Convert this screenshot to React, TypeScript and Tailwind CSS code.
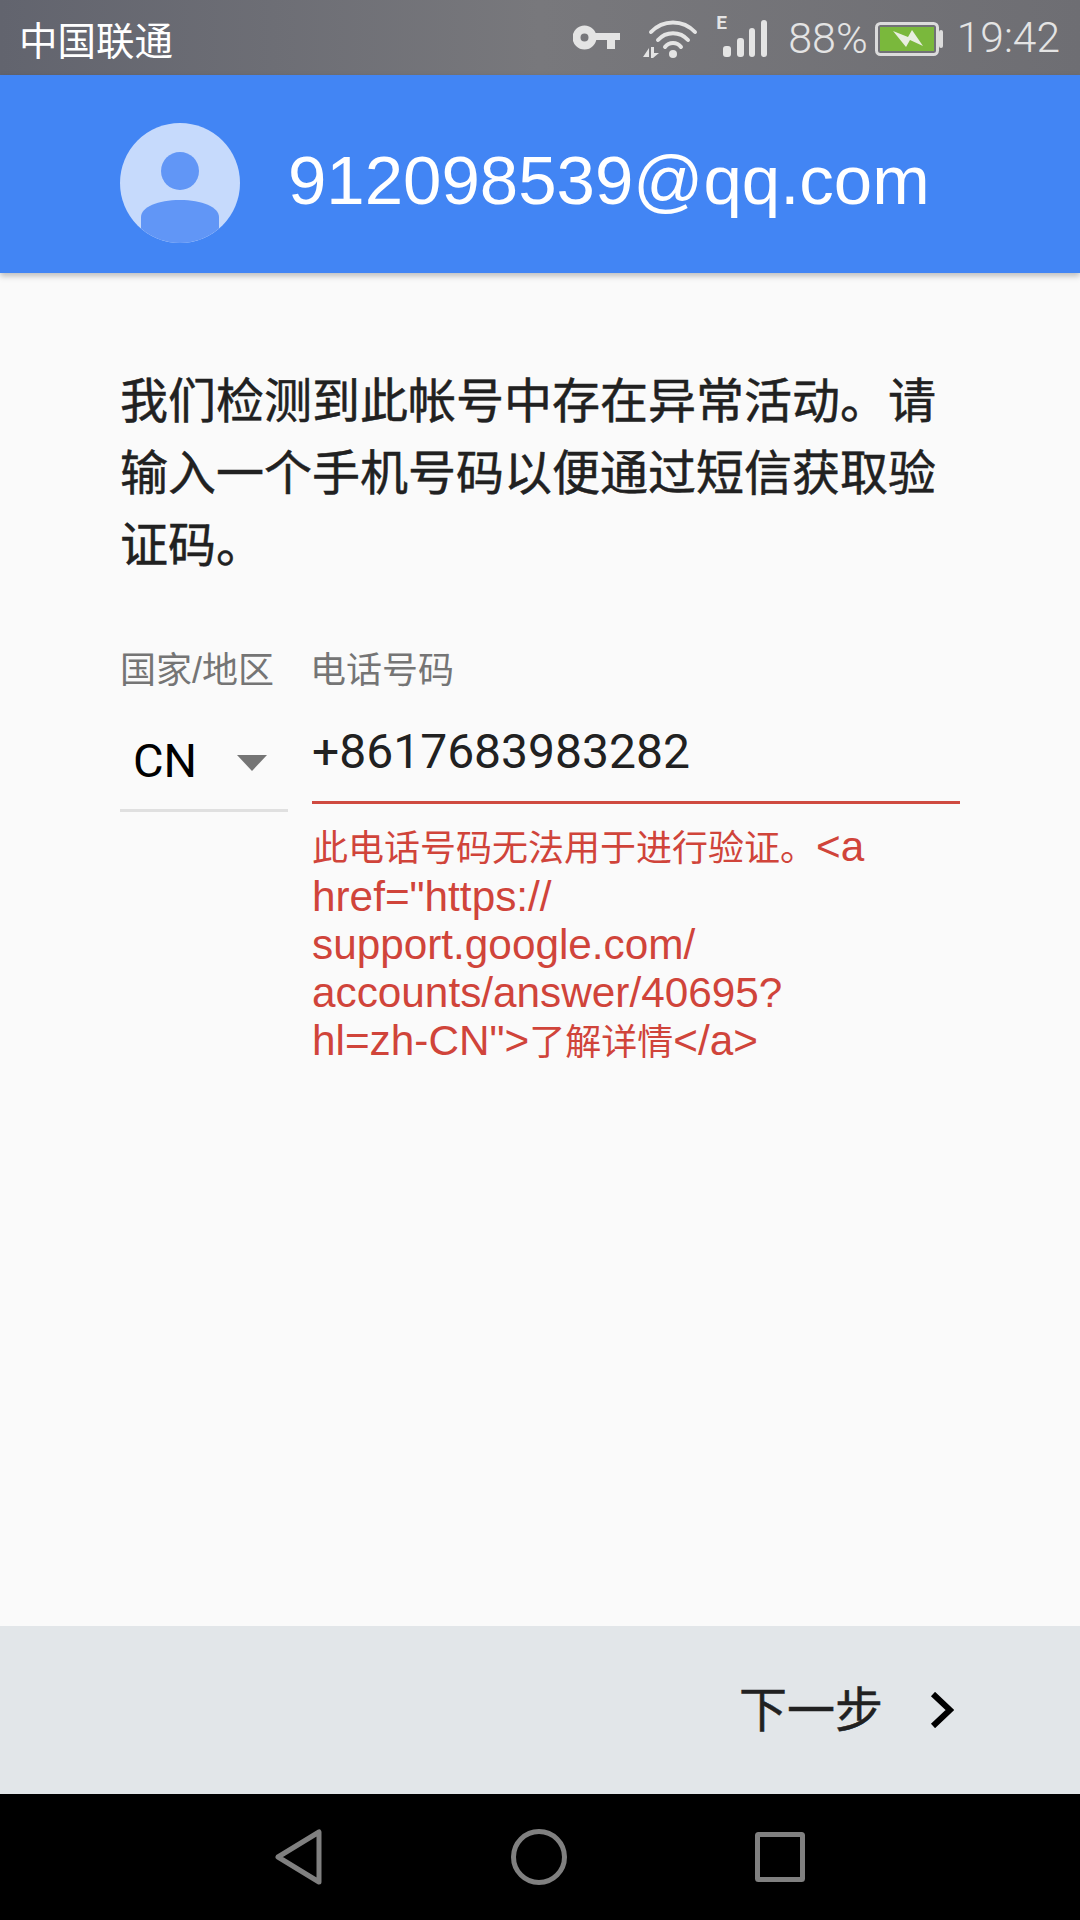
const roboto = "font-['Roboto','Noto_Sans_CJK_SC',sans-serif]";

function KeyIcon() {
  return (
    <svg width="47" height="25" viewBox="0 0 47 25" fill="#e4e4e4">
      <path fillRule="evenodd" d="M11.5 0.5a12 12 0 1 1 0 24a12 12 0 0 1 0-24zM11.5 8.5a4 4 0 1 0 0 8a4 4 0 0 0 0-8z" />
      <path d="M20 8h27v7h-5v9h-8v-9H20z" />
    </svg>
  );
}

function WifiIcon() {
  return (
    <svg width="56" height="38" viewBox="0 0 56 38" fill="none" stroke="#e4e4e4" strokeWidth="4" strokeLinecap="round">
      <path d="M8 12A30 30 0 0 1 52 12" />
      <path d="M15 20A20 20 0 0 1 45 20" />
      <path d="M22 27A10 10 0 0 1 38 27" />
      <circle cx="30" cy="34" r="4" fill="#e4e4e4" stroke="none" />
      <path d="M0 37L6 28V37zM8 27H11V33L16 33L10 38H8z" fill="#e4e4e4" stroke="none" />
    </svg>
  );
}

function SignalIcon() {
  return (
    <div className="relative w-[44px] h-[37px] flex items-end">
      <span className={`absolute left-[-7px] top-[-7px] text-[19px] leading-[19px] font-bold text-[#e4e4e4] ${roboto}`}>E</span>
      <div className="w-[8px] h-[11px] rounded-[3px] bg-[#e4e4e4]" />
      <div className="ml-[6px] w-[7px] h-[19px] rounded-[3px] bg-[#e4e4e4]" />
      <div className="ml-[5px] w-[6px] h-[29px] rounded-[3px] bg-[#e4e4e4]" />
      <div className="ml-[6px] w-[6px] h-[37px] rounded-[3px] bg-[#e4e4e4]" />
    </div>
  );
}

function BatteryIcon() {
  return (
    <svg width="68" height="34" viewBox="0 0 68 34">
      <rect x="1.5" y="1.5" width="61" height="31" rx="4" fill="none" stroke="#dcdcdc" strokeWidth="3" />
      <rect x="5" y="5" width="54" height="24" fill="#7ab83c" />
      <rect x="64" y="8" width="4" height="18" rx="2" fill="#dcdcdc" />
      <path d="M18 9L33 15L37 8L48 24L35 18L31 25z" fill="#e8eee0" />
    </svg>
  );
}

function Avatar() {
  return (
    <svg width="120" height="120" viewBox="0 0 120 120" className="shrink-0">
      <circle cx="60" cy="60" r="60" fill="#c6dafc" />
      <circle cx="60" cy="48" r="19" fill="#6196f6" />
      <path d="M21 105.6V94C21 84 38 77 60 77C82 77 99 84 99 94V105.6A60 60 0 0 1 21 105.6z" fill="#6196f6" />
    </svg>
  );
}

export default function App() {
  return (
    <div className="w-[1080px] h-[1920px] flex flex-col overflow-hidden bg-[#fafafa] font-['Liberation_Sans','Noto_Sans_CJK_SC',sans-serif]">
      {/* Status bar */}
      <div className="h-[75px] shrink-0 flex items-center pl-[19px] pr-[20px] bg-gradient-to-r from-[#62646e] via-[#78787c] to-[#6e6e73]">
        <span className="text-[38.5px] leading-[48px] text-white font-['Noto_Sans_CJK_SC',sans-serif]">中国联通</span>
        <div className="ml-auto flex items-center">
          <KeyIcon />
          <div className="ml-[23px] mt-[2px]"><WifiIcon /></div>
          <div className="ml-[24px] mt-[1px]"><SignalIcon /></div>
          <span className={`ml-[21px] text-[43px] leading-[48px] font-light text-[#e4e4e4] ${roboto}`}>88%</span>
          <div className="ml-[7px] mt-[3px]"><BatteryIcon /></div>
          <span className={`ml-[14px] text-[42.5px] leading-[48px] font-light text-[#e4e4e4] ${roboto}`}>19:42</span>
        </div>
      </div>

      {/* Account header */}
      <div className="relative h-[198px] shrink-0 flex items-center gap-[48px] pl-[120px] pt-[18px] bg-[#4285f4] shadow-[0_3px_6px_rgba(0,0,0,0.25)]">
        <Avatar />
        <span className="text-[69px] leading-[80px] text-white -mt-[4px]">912098539@qq.com</span>
      </div>

      {/* Form */}
      <div className="flex-1 pt-[88px] pl-[120px] pr-[120px]">
        <p className="text-[48px] leading-[72px] text-[#212121] [-webkit-text-stroke:0.5px_#212121] font-['Noto_Sans_CJK_SC',sans-serif]">
          我们检测到此帐号中存在异常活动。请输入一个手机号码以便通过短信获取验证码。
        </p>

        <div className="mt-[70px] flex gap-[24px]">
          <div className="w-[168px] shrink-0">
            <div className="text-[36px] leading-[48px] text-[#757575] whitespace-nowrap">国家/地区</div>
            <div className="mt-[30px] h-[87px] flex items-center border-b-[3px] border-[#e0e0e0] pl-[13px] pb-[12px]">
              <span className={`text-[47px] leading-[56px] text-black ${roboto}`}>CN</span>
              <svg width="30" height="16" viewBox="0 0 30 16" className="ml-[40px] mt-[4px]">
                <path d="M0 0H30L15 16z" fill="#757575" />
              </svg>
            </div>
          </div>
          <div className="flex-1 min-w-0">
            <div className="-ml-[2px] text-[36px] leading-[48px] text-[#757575]">电话号码</div>
            <div className={`mt-[25px] h-[84px] border-b-[3px] border-[#cf4a40] text-[48px] leading-[64px] text-[#212121] ${roboto}`}>
              +8617683983282
            </div>
            <p className="mt-[19px] text-[42.3px] leading-[48px] text-[#d0443a]">
              <span className="text-[36px]">此电话号码无法用于进行验证。</span>&lt;a<br />
              href="https://<br />
              support.google.com/<br />
              accounts/answer/40695?<br />
              hl=zh-CN"&gt;<span className="text-[36px]">了解详情</span>&lt;/a&gt;
            </p>
          </div>
        </div>
      </div>

      {/* Footer */}
      <div className="h-[168px] shrink-0 flex items-center justify-end pr-[126px] bg-[#e2e6e9]">
        <span className="text-[48px] leading-[64px] mb-[9px] text-[#212121] [-webkit-text-stroke:0.5px_#212121] font-['Noto_Sans_CJK_SC',sans-serif]">下一步</span>
        <svg width="24" height="36" viewBox="0 0 24 36" fill="none" stroke="#000" strokeWidth="6" className="ml-[47px]">
          <path d="M3 2L20 18L3 34" />
        </svg>
      </div>

      {/* Nav bar */}
      <div className="h-[126px] shrink-0 flex items-center justify-center gap-[188px] bg-black">
        <svg width="47" height="56" viewBox="0 0 47 56" fill="none" stroke="#808080" strokeWidth="5" strokeLinejoin="round">
          <path d="M44 3V53L3 28z" />
        </svg>
        <svg width="56" height="56" viewBox="0 0 56 56" fill="none" stroke="#808080" strokeWidth="5" className="ml-[1px]">
          <circle cx="28" cy="28" r="25.5" />
        </svg>
        <svg width="50" height="50" viewBox="0 0 50 50" fill="none" stroke="#808080" strokeWidth="5" strokeLinejoin="round">
          <rect x="2.5" y="2.5" width="45" height="45" rx="1" />
        </svg>
      </div>
    </div>
  );
}
